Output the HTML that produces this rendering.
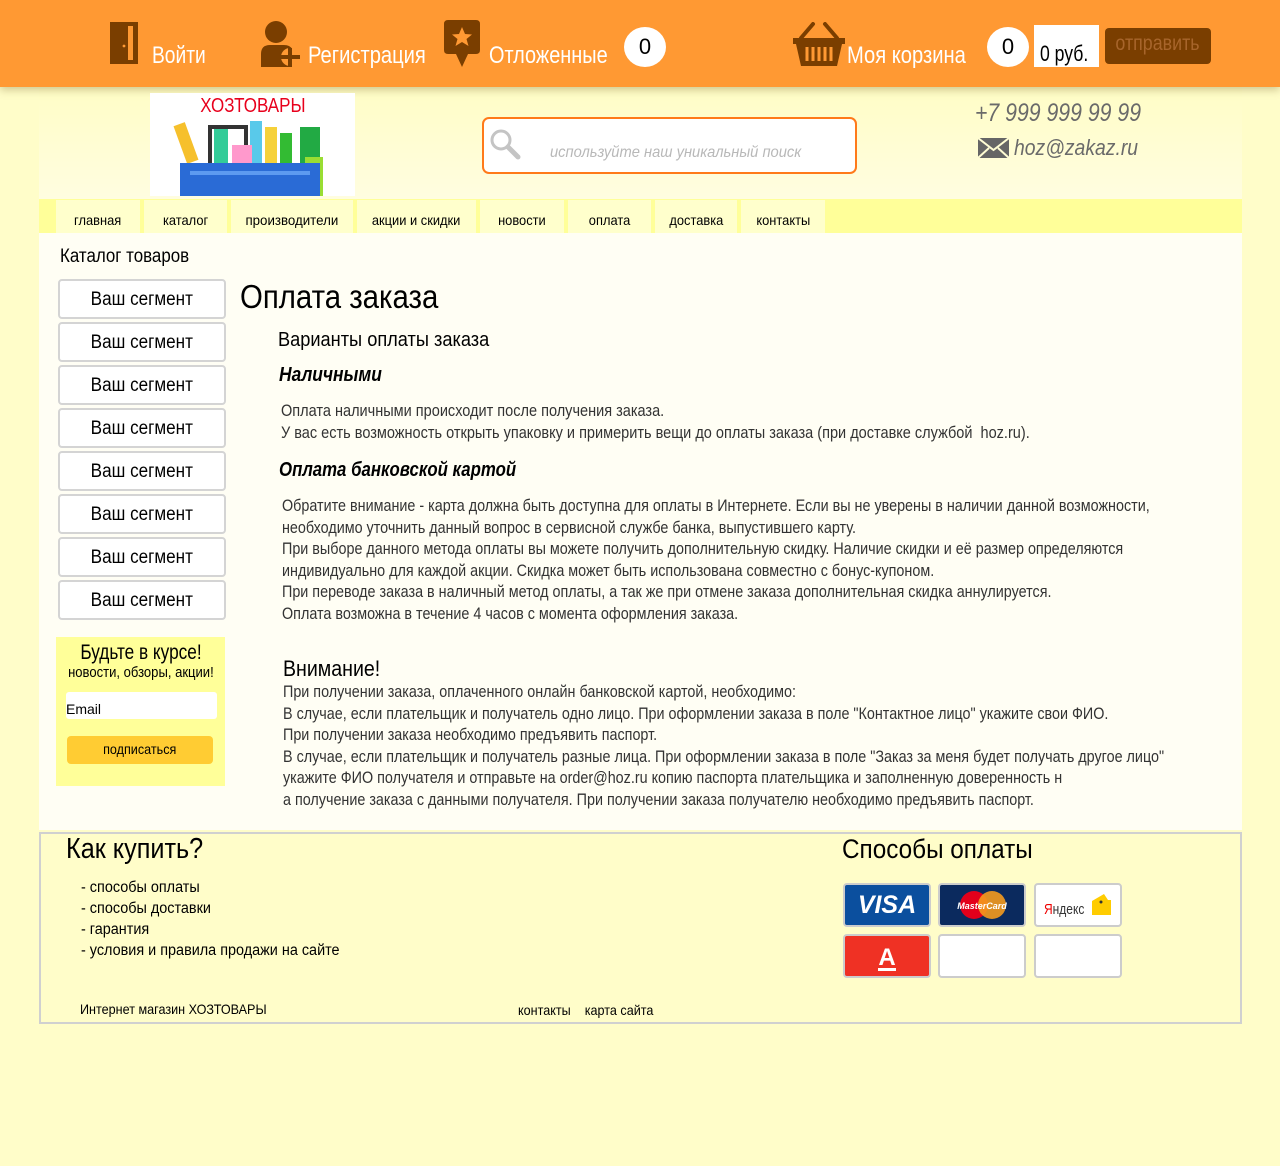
<!DOCTYPE html>
<html><head><meta charset="utf-8"><style>
*{margin:0;padding:0;box-sizing:border-box}
body{width:1280px;height:1166px;background:#fffdc9;font-family:"Liberation Sans",sans-serif;position:relative;overflow:hidden;color:#000}
.a{position:absolute;white-space:nowrap}
.s{display:inline-block;transform:scaleX(var(--k,.88));transform-origin:0 0}
.c{display:inline-block;transform:scaleX(var(--k,.9));transform-origin:50% 0}
#hdr{left:0;top:0;width:1280px;height:87px;background:#ff9933;box-shadow:0 3px 8px rgba(120,100,40,.35)}
.ht{color:#fff;font-size:24px}
.circ{width:42px;height:40px;border-radius:50%;background:#fff;font-size:22px;text-align:center;line-height:40px}
#main{left:39px;top:233px;width:1203px;height:597px;background:#fffef4}
#hdr2{left:39px;top:87px;width:1203px;height:112px;background:linear-gradient(#fffdc6,#fffde0)}
#nav{left:39px;top:199px;width:1203px;height:34px;background:#ffff99}
.ni{position:absolute;top:200px;height:33px;background:#ffffcc;font-size:14px;text-align:center;line-height:40px}
.seg{left:58px;width:168px;height:40px;border:2px solid #d4d4d4;border-radius:4px;background:#fff;font-size:19px;text-align:center;line-height:38px}
.tx{font-size:16.5px;color:#333;line-height:21.6px}
.card{width:88px;height:44px;border:2px solid #ccc;border-radius:4px;background:#fff}
</style></head><body>
<div id="hdr2" class="a"></div>
<div id="main" class="a"></div>
<div id="nav" class="a"></div>
<div id="hdr" class="a"></div>

<svg class="a" style="left:108px;top:20px" width="32" height="46" viewBox="0 0 32 46"><path d="M2 2h28v42H2z" fill="#7a3e00"/><path d="M7 6h18v34H7z" fill="#ff9933"/><path d="M2 2l18 4v38L2 44z" fill="#7a3e00"/><circle cx="16" cy="26" r="1.4" fill="#ff9933"/></svg>
<div class="a ht" style="left:152px;top:42px"><span class="s" style="--k:.8">Войти</span></div>
<svg class="a" style="left:260px;top:20px" width="42" height="48" viewBox="0 0 42 48"><circle cx="16" cy="12" r="11" fill="#7a3e00"/><path d="M1 47V34q0-9 9-9h14q6 0 8 4v18z" fill="#7a3e00"/><circle cx="30" cy="37" r="9" fill="#ff9933"/><path d="M28 28h4v7h8v4h-8v8h-4v-8h-8v-4h8z" fill="#7a3e00"/></svg>
<div class="a ht" style="left:308px;top:42px"><span class="s" style="--k:.84">Регистрация</span></div>
<svg class="a" style="left:444px;top:20px" width="36" height="47" viewBox="0 0 36 47"><path d="M4 0h28q4 0 4 4v26q0 4-4 4H24l-6 13-6-13H4q-4 0-4-4V4q0-4 4-4z" fill="#7a3e00"/><path d="M18 7l3 7 7 .5-5.5 4.5 2 7-6.5-4-6.5 4 2-7L8 14.5l7-.5z" fill="#ff9933"/></svg>
<div class="a ht" style="left:489px;top:42px"><span class="s" style="--k:.83">Отложенные</span></div>
<div class="a circ" style="left:624px;top:27px">0</div>
<svg class="a" style="left:793px;top:22px" width="52" height="46" viewBox="0 0 52 46"><path d="M8 16L20 2M44 16L32 2" stroke="#7a3e00" stroke-width="4" stroke-linecap="round"/><path d="M0 16h52v6h-3l-5 22H8L3 22H0z" fill="#7a3e00"/><path d="M14 25v14M20 25v14M26 25v14M32 25v14M38 25v14" stroke="#ff9933" stroke-width="3"/></svg>
<div class="a ht" style="left:847px;top:42px"><span class="s" style="--k:.84">Моя корзина</span></div>
<div class="a circ" style="left:987px;top:27px">0</div>
<div class="a" style="left:1034px;top:25px;width:65px;height:42px;background:#fff;font-size:22px;padding:18px 0 0 6px;line-height:22px"><span class="s" style="--k:.8">0 руб.</span></div>
<div class="a" style="left:1105px;top:28px;width:106px;height:36px;background:#7a3e00;border-radius:4px;color:#a7652b;font-size:21px;text-align:center;line-height:32px"><span class="c" style="--k:.85">отправить</span></div>

<div class="a" style="left:150px;top:93px;width:205px;height:103px;background:#fff;overflow:hidden">
<div style="color:#e8001c;font-size:20px;text-align:center;margin-top:2px"><span class="c" style="--k:.85">ХОЗТОВАРЫ</span></div>
<svg width="205" height="80" viewBox="0 0 205 80" style="position:absolute;top:24px;left:0"><rect x="30" y="6" width="12" height="40" fill="#f6c02c" transform="rotate(-20 36 26)"/><rect x="60" y="10" width="36" height="50" fill="none" stroke="#333" stroke-width="4"/><rect x="64" y="12" width="14" height="44" fill="#3c9" /><rect x="100" y="4" width="12" height="45" fill="#59c9ea"/><rect x="115" y="10" width="12" height="40" fill="#f6d13a"/><rect x="130" y="16" width="12" height="40" fill="#3b3"/><rect x="150" y="10" width="20" height="50" fill="#2a4"/><rect x="155" y="40" width="18" height="40" fill="#9d3"/><rect x="82" y="28" width="20" height="24" fill="#f9c"/><rect x="30" y="46" width="140" height="34" fill="#2a6bd6"/><rect x="40" y="54" width="120" height="4" fill="#5d9af0"/></svg>
</div>

<div class="a" style="left:482px;top:117px;width:375px;height:57px;border:2px solid #ff7a1a;border-radius:7px;background:#fff"></div>
<svg class="a" style="left:489px;top:128px" width="32" height="32" viewBox="0 0 32 32"><circle cx="12" cy="12" r="9" fill="none" stroke="#c4c4c4" stroke-width="3"/><path d="M19 19l10 10" stroke="#c4c4c4" stroke-width="5" stroke-linecap="round"/></svg>
<div class="a" style="left:550px;top:144px;font-size:16px;color:#b8b8b8;font-style:italic"><span class="s" style="--k:.92">используйте наш уникальный поиск</span></div>
<div class="a" style="left:975px;top:99px;font-size:25px;color:#6a6a6a;font-style:italic"><span class="s" style="--k:.85">+7 999 999 99 99</span></div>
<svg class="a" style="left:978px;top:138px" width="31" height="20" viewBox="0 0 31 20"><rect width="31" height="20" fill="#666"/><path d="M0 0l15.5 12L31 0M0 20l11-10M31 20L20 10" stroke="#fffdd4" stroke-width="2" fill="none"/></svg>
<div class="a" style="left:1014px;top:135px;font-size:22px;color:#6a6a6a;font-style:italic"><span class="s" style="--k:.88">hoz@zakaz.ru</span></div>

<div class="ni" style="left:56px;width:84px"><span class="c" style="--k:.92">главная</span></div>
<div class="ni" style="left:144px;width:83px"><span class="c" style="--k:.92">каталог</span></div>
<div class="ni" style="left:231px;width:122px"><span class="c" style="--k:.95">производители</span></div>
<div class="ni" style="left:357px;width:119px"><span class="c" style="--k:.92">акции и скидки</span></div>
<div class="ni" style="left:480px;width:84px"><span class="c" style="--k:.92">новости</span></div>
<div class="ni" style="left:568px;width:83px"><span class="c" style="--k:.92">оплата</span></div>
<div class="ni" style="left:655px;width:82px"><span class="c" style="--k:.92">доставка</span></div>
<div class="ni" style="left:741px;width:84px"><span class="c" style="--k:.92">контакты</span></div>

<div class="a" style="left:60px;top:246px;font-size:19px"><span class="s" style="--k:.89">Каталог товаров</span></div>
<div class="a seg" style="top:279px"><span class="c">Ваш сегмент</span></div>
<div class="a seg" style="top:322px"><span class="c">Ваш сегмент</span></div>
<div class="a seg" style="top:365px"><span class="c">Ваш сегмент</span></div>
<div class="a seg" style="top:408px"><span class="c">Ваш сегмент</span></div>
<div class="a seg" style="top:451px"><span class="c">Ваш сегмент</span></div>
<div class="a seg" style="top:494px"><span class="c">Ваш сегмент</span></div>
<div class="a seg" style="top:537px"><span class="c">Ваш сегмент</span></div>
<div class="a seg" style="top:580px"><span class="c">Ваш сегмент</span></div>
<div class="a" style="left:56px;top:637px;width:169px;height:149px;background:#ffff99">
<div style="text-align:center;font-size:21px;margin-top:4px;line-height:24px"><span class="c" style="--k:.82">Будьте в курсе!</span></div>
<div style="text-align:center;font-size:14.5px;line-height:16px"><span class="c" style="--k:.9">новости, обзоры, акции!</span></div>
<div style="position:absolute;left:10px;top:55px;width:151px;height:27px;background:#fff;border-radius:3px;font-size:14px;padding-top:9px">Email</div>
<div style="position:absolute;left:11px;top:99px;width:146px;height:28px;background:#ffcc33;border-radius:4px;font-size:14px;text-align:center;line-height:26px"><span class="c">подписаться</span></div>
</div>

<div class="a" style="left:240px;top:278px;font-size:33px"><span class="s" style="--k:.89">Оплата заказа</span></div>
<div class="a" style="left:278px;top:329px;font-size:20px"><span class="s" style="--k:.91">Варианты оплаты заказа</span></div>
<div class="a" style="left:279px;top:364px;font-size:20px;font-weight:bold;font-style:italic"><span class="s" style="--k:.87">Наличными</span></div>
<div class="a tx" style="left:281px;top:401px"><span class="s">Оплата наличными происходит после получения заказа.<br>У вас есть возможность открыть упаковку и примерить вещи до оплаты заказа (при доставке службой&nbsp; hoz.ru).</span></div>
<div class="a" style="left:279px;top:459px;font-size:20px;font-weight:bold;font-style:italic"><span class="s" style="--k:.84">Оплата банковской картой</span></div>
<div class="a tx" style="left:282px;top:496px"><span class="s" style="--k:.87">Обратите внимание - карта должна быть доступна для оплаты в Интернете. Если вы не уверены в наличии данной возможности,<br>необходимо уточнить данный вопрос в сервисной службе банка, выпустившего карту.<br>При выборе данного метода оплаты вы можете получить дополнительную скидку. Наличие скидки и её размер определяются<br>индивидуально для каждой акции. Скидка может быть использована совместно с бонус-купоном.<br>При переводе заказа в наличный метод оплаты, а так же при отмене заказа дополнительная скидка аннулируется.<br>Оплата возможна в течение 4 часов с момента оформления заказа.</span></div>
<div class="a" style="left:283px;top:656px;font-size:22px"><span class="s" style="--k:.89">Внимание!</span></div>
<div class="a tx" style="left:283px;top:682px"><span class="s" style="--k:.87">При получении заказа, оплаченного онлайн банковской картой, необходимо:<br>В случае, если плательщик и получатель одно лицо. При оформлении заказа в поле "Контактное лицо" укажите свои ФИО.<br>При получении заказа необходимо предъявить паспорт.<br>В случае, если плательщик и получатель разные лица. При оформлении заказа в поле "Заказ за меня будет получать другое лицо"<br>укажите ФИО получателя и отправьте на order@hoz.ru копию паспорта плательщика и заполненную доверенность н<br>а получение заказа с данными получателя. При получении заказа получателю необходимо предъявить паспорт.</span></div>

<div class="a" style="left:39px;top:832px;width:1203px;height:192px;border:2px solid #d0d0d0;background:#fffdc9"></div>
<div class="a" style="left:66px;top:833px;font-size:29px"><span class="s" style="--k:.87">Как купить?</span></div>
<div class="a" style="left:81px;top:877px;font-size:15.5px;line-height:21px"><span class="s" style="--k:.93">- способы оплаты<br>- способы доставки<br>- гарантия<br>- условия и правила продажи на сайте</span></div>
<div class="a" style="left:80px;top:1001px;font-size:14px"><span class="s" style="--k:.9">Интернет магазин ХОЗТОВАРЫ</span></div>
<div class="a" style="left:518px;top:1002px;font-size:14px"><span class="s" style="--k:.9">контакты&nbsp;&nbsp;&nbsp; карта сайта</span></div>
<div class="a" style="left:842px;top:834px;font-size:27px"><span class="s" style="--k:.9">Способы оплаты</span></div>
<div class="a card" style="left:843px;top:883px;background:#0b4f9e;color:#fff;font-weight:bold;font-style:italic;font-size:25px;text-align:center;line-height:40px">VISA</div>
<div class="a card" style="left:938px;top:883px;background:#0b2a5e;overflow:hidden"><svg width="84" height="40"><circle cx="34" cy="20" r="14" fill="#e3001b"/><circle cx="52" cy="20" r="14" fill="#f49a1e" opacity=".9"/><text x="42" y="24" font-size="9" fill="#fff" text-anchor="middle" font-style="italic" font-weight="bold" font-family="Liberation Sans">MasterCard</text></svg></div>
<div class="a card" style="left:1034px;top:883px;overflow:hidden"><span style="position:absolute;left:8px;top:16px;font-size:15px;color:#333"><span class="s" style="--k:.8"><span style="color:#e00">Я</span>ндекс</span></span><svg style="position:absolute;left:54px;top:8px" width="22" height="24"><path d="M2 8l12-7 4 6h3v15H2z" fill="#fc0"/><circle cx="11" cy="9" r="1.5" fill="#333"/></svg></div>
<div class="a card" style="left:843px;top:934px;background:#ef3124"><svg width="84" height="40"><text x="42" y="29" font-size="24" fill="#fff" text-anchor="middle" font-family="Liberation Sans" font-weight="bold">A</text><rect x="33" y="32" width="18" height="3" fill="#fff"/></svg></div>
<div class="a card" style="left:938px;top:934px"></div>
<div class="a card" style="left:1034px;top:934px"></div>
</body></html>
